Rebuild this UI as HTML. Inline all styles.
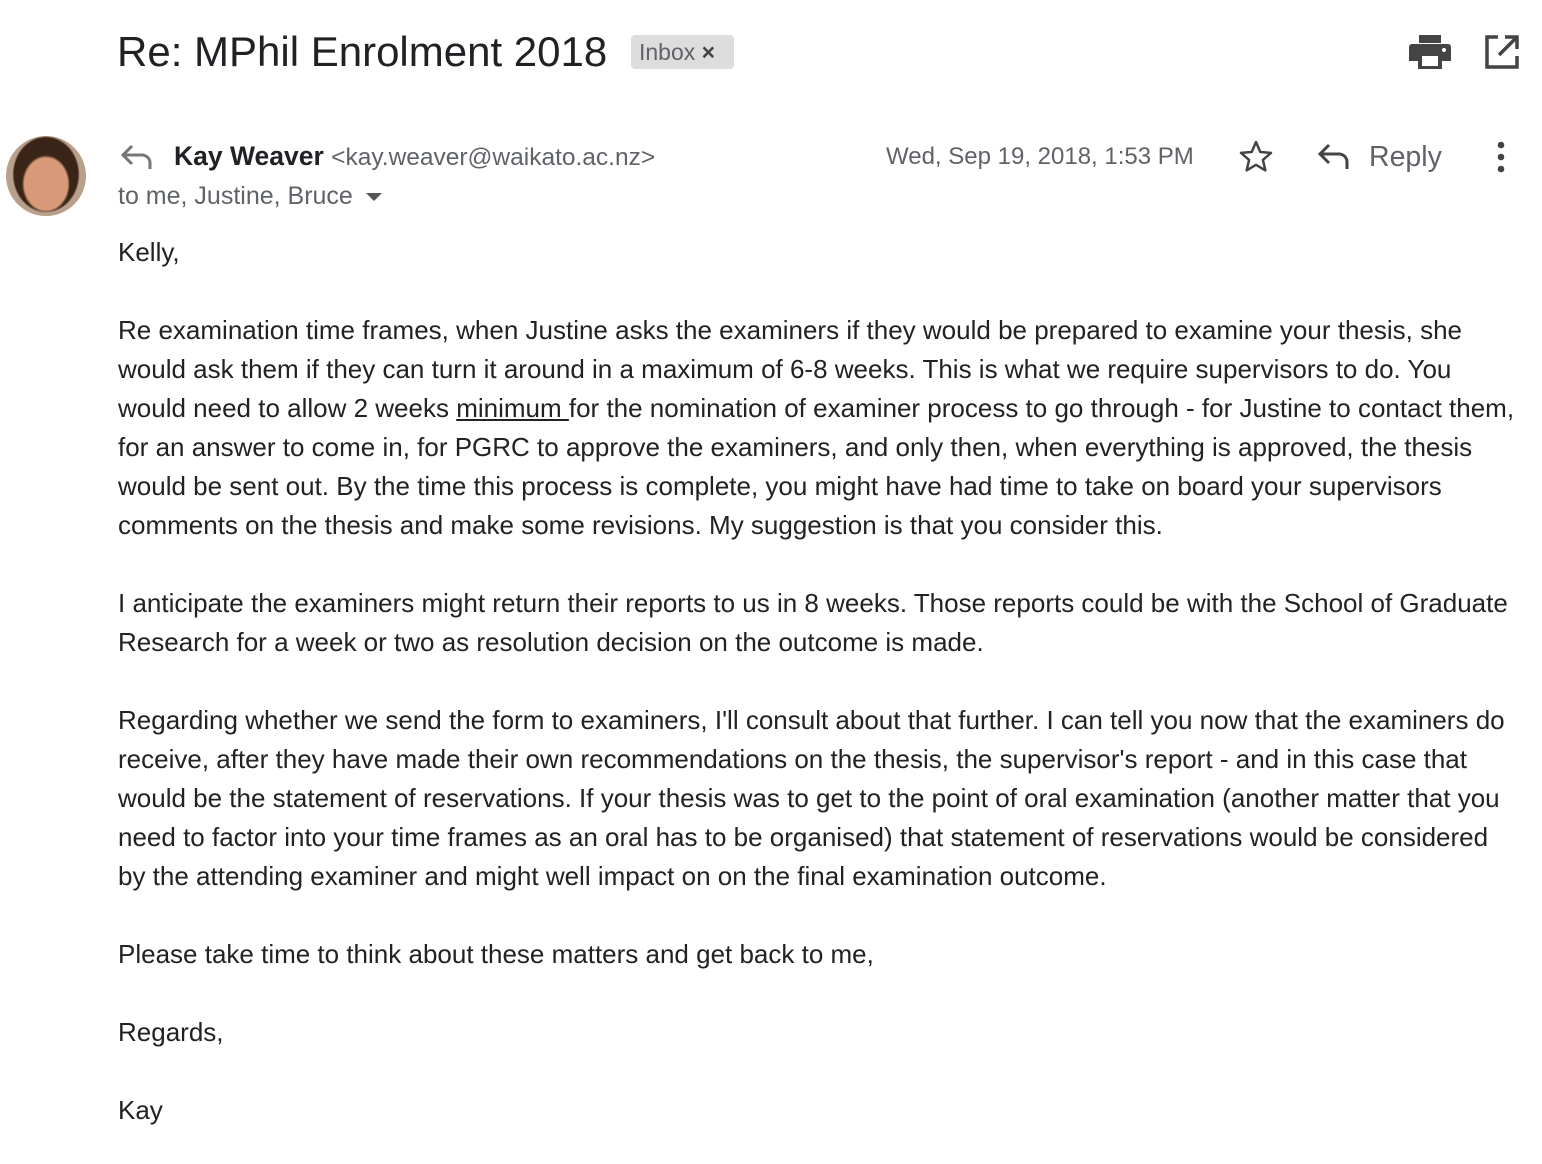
<!DOCTYPE html>
<html><head><meta charset="utf-8"><style>
body{margin:0;width:1542px;height:1164px;background:#fff;position:relative;overflow:hidden;font-family:"Liberation Sans",Arial,sans-serif;}
.a{position:absolute;white-space:nowrap}
.l{position:absolute;left:118px;font-size:26px;line-height:39px;color:#222;white-space:nowrap}
</style></head><body>
<div class="a" style="left:117px;top:26px;font-size:42px;line-height:52px;color:#202124">Re: MPhil Enrolment 2018</div>
<div class="a" style="left:631px;top:35px;width:103px;height:34px;background:#ddd;border-radius:4px;font-size:23px;line-height:34px;color:#5f6368;padding-left:8px;box-sizing:border-box">Inbox <span style="color:#444;font-weight:bold">×</span></div>
<svg class="a" style="left:1408px;top:34px" width="44" height="36" viewBox="0 0 44 36"><path d="M11 1h22v8H11z M4 10h36a3 3 0 0 1 3 3v14h-9v8H10v-8H1V13a3 3 0 0 1 3-3z" fill="#444"/><rect x="14" y="22" width="16" height="10" fill="#fff"/><circle cx="36" cy="16" r="2" fill="#fff"/></svg>
<svg class="a" style="left:1484px;top:34px" width="36" height="36" viewBox="0 0 36 36"><path d="M14 3H3v30h30V22" fill="none" stroke="#444" stroke-width="3.5"/><path d="M21 3h12v12M33 3L15 21" fill="none" stroke="#444" stroke-width="3.5"/></svg>
<div class="a" style="left:6px;top:136px;width:80px;height:80px;border-radius:50%;background:radial-gradient(ellipse 30% 36% at 50% 60%,#d89a78 0 90%,transparent 100%),radial-gradient(ellipse 42% 48% at 50% 48%,#3a2418 0 95%,transparent 100%),#b8a08a"></div>
<svg class="a" style="left:120px;top:143px" width="34" height="28" viewBox="0 0 34 28"><path d="M12 3L3 12l9 9M3 12h19a8 8 0 0 1 8 8v6" fill="none" stroke="#777" stroke-width="3"/></svg>
<div class="a" style="left:174px;top:140px;font-size:26.5px;line-height:32px;color:#202124"><b>Kay Weaver</b> <span style="font-size:24.5px;color:#5f6368">&lt;kay.weaver@waikato.ac.nz&gt;</span></div>
<div class="a" style="left:118px;top:181px;font-size:25px;line-height:30px;color:#5f6368">to me, Justine, Bruce <span style="display:inline-block;width:0;height:0;border-left:8px solid transparent;border-right:8px solid transparent;border-top:8px solid #555;vertical-align:middle;margin-left:6px"></span></div>
<div class="a" style="left:886px;top:141px;font-size:24px;line-height:32px;color:#5f6368">Wed, Sep 19, 2018, 1:53 PM</div>
<svg class="a" style="left:1238px;top:139px" width="36" height="34" viewBox="0 0 36 34"><path d="M18 3l4.3 10 10.7 .9-8.1 7 2.5 10.5L18 25.8 8.6 31.4l2.5-10.5-8.1-7 10.7-.9z" fill="none" stroke="#444" stroke-width="2.5" stroke-linejoin="round"/></svg>
<svg class="a" style="left:1316px;top:141px" width="36" height="30" viewBox="0 0 36 30"><path d="M13 4L4 13l9 9M4 13h19a8 8 0 0 1 8 8v7" fill="none" stroke="#444" stroke-width="3"/></svg>
<div class="a" style="left:1369px;top:140px;font-size:28.5px;line-height:34px;color:#5f6368">Reply</div>
<svg class="a" style="left:1494px;top:140px" width="14" height="34"><circle cx="7" cy="5" r="3.3" fill="#444"/><circle cx="7" cy="17" r="3.3" fill="#444"/><circle cx="7" cy="29" r="3.3" fill="#444"/></svg>

<div class="l" style="top:233px">Kelly,</div>
<div class="l" style="top:311px">Re examination time frames, when Justine asks the examiners if they would be prepared to examine your thesis, she</div>
<div class="l" style="top:350px">would ask them if they can turn it around in a maximum of 6-8 weeks. This is what we require supervisors to do. You</div>
<div class="l" style="top:389px">would need to allow 2 weeks <u>minimum </u>for the nomination of examiner process to go through - for Justine to contact them,</div>
<div class="l" style="top:428px">for an answer to come in, for PGRC to approve the examiners, and only then, when everything is approved, the thesis</div>
<div class="l" style="top:467px">would be sent out. By the time this process is complete, you might have had time to take on board your supervisors</div>
<div class="l" style="top:506px">comments on the thesis and make some revisions. My suggestion is that you consider this.</div>
<div class="l" style="top:584px">I anticipate the examiners might return their reports to us in 8 weeks. Those reports could be with the School of Graduate</div>
<div class="l" style="top:623px">Research for a week or two as resolution decision on the outcome is made.</div>
<div class="l" style="top:701px">Regarding whether we send the form to examiners, I'll consult about that further. I can tell you now that the examiners do</div>
<div class="l" style="top:740px">receive, after they have made their own recommendations on the thesis, the supervisor's report - and in this case that</div>
<div class="l" style="top:779px">would be the statement of reservations. If your thesis was to get to the point of oral examination (another matter that you</div>
<div class="l" style="top:818px">need to factor into your time frames as an oral has to be organised) that statement of reservations would be considered</div>
<div class="l" style="top:857px">by the attending examiner and might well impact on on the final examination outcome.</div>
<div class="l" style="top:935px">Please take time to think about these matters and get back to me,</div>
<div class="l" style="top:1013px">Regards,</div>
<div class="l" style="top:1091px">Kay</div>
</body></html>
